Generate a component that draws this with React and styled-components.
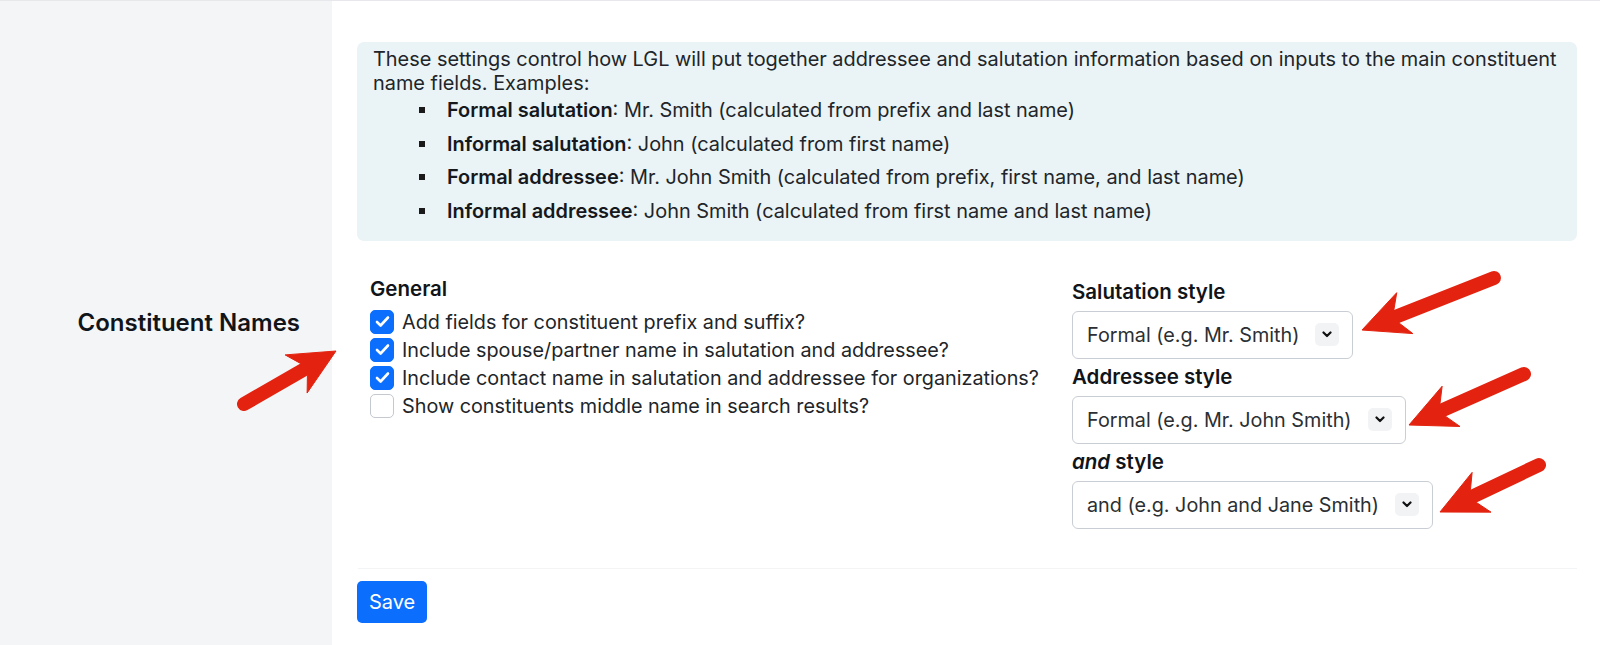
import React from "react";
import styled, { createGlobalStyle } from "styled-components";

const GlobalStyle = createGlobalStyle`
  html, body {
    margin: 0;
    padding: 0;
    background: #ffffff;
  }
  body {
    font-family: Inter, "Noto Sans", "Liberation Sans", sans-serif;
    color: #212529;
  }
`;

const examples = [
  ["Formal salutation", "Mr. Smith (calculated from prefix and last name)"],
  ["Informal salutation", "John (calculated from first name)"],
  ["Formal addressee", "Mr. John Smith (calculated from prefix, first name, and last name)"],
  ["Informal addressee", "John Smith (calculated from first name and last name)"],
];

const options = [
  { label: "Add fields for constituent prefix and suffix?", checked: true },
  { label: "Include spouse/partner name in salutation and addressee?", checked: true },
  { label: "Include contact name in salutation and addressee for organizations?", checked: true },
  { label: "Show constituents middle name in search results?", checked: false },
];

// annotation arrows: tail point and tip point
const arrows = [
  { tail: [244, 403], tip: [336, 350] },
  { tail: [1494, 277], tip: [1362, 329] },
  { tail: [1524, 373], tip: [1409, 424] },
  { tail: [1539, 464], tip: [1440, 511] },
];

function Arrow({ tail, tip }) {
  const headLen = 46;
  const headHalf = 22;
  const shaft = 14;
  const notch = 9;
  const dx = tip[0] - tail[0];
  const dy = tip[1] - tail[1];
  const len = Math.sqrt(dx * dx + dy * dy);
  const ux = dx / len;
  const uy = dy / len;
  const nx = -uy;
  const ny = ux;
  const bx = tip[0] - ux * headLen;
  const by = tip[1] - uy * headLen;
  const kx = tip[0] - ux * (headLen - notch);
  const ky = tip[1] - uy * (headLen - notch);
  const pts = [
    [tip[0], tip[1]],
    [bx + nx * headHalf, by + ny * headHalf],
    [kx + nx * shaft / 2, ky + ny * shaft / 2],
    [kx - nx * shaft / 2, ky - ny * shaft / 2],
    [bx - nx * headHalf, by - ny * headHalf],
  ];
  const ex = tip[0] - ux * (headLen - notch - 4);
  const ey = tip[1] - uy * (headLen - notch - 4);
  return (
    <g fill="#e3230f" stroke="#e3230f">
      <line x1={tail[0]} y1={tail[1]} x2={ex} y2={ey} strokeWidth={shaft} strokeLinecap="round" />
      <polygon points={pts.map((p) => p.join(",")).join(" ")} strokeWidth="1" strokeLinejoin="miter" />
    </g>
  );
}

function Chevron() {
  return (
    <svg width="10" height="7" viewBox="0 0 10 7">
      <path d="M1.5 1.5 L5 5 L8.5 1.5" fill="none" stroke="#111" strokeWidth="2.2" strokeLinecap="round" strokeLinejoin="round" />
    </svg>
  );
}

function Check() {
  return (
    <svg width="15" height="13" viewBox="0 0 15 13">
      <path d="M2 7 L5.6 10.5 L13 2.5" fill="none" stroke="#fff" strokeWidth="2.6" strokeLinecap="round" strokeLinejoin="round" />
    </svg>
  );
}

export default function App() {
  return (
    <Page>
      <GlobalStyle />
      <Sidebar>
        <SectionTitle>Constituent Names</SectionTitle>
      </Sidebar>
      <Main>
        <InfoBox>
          <Intro>
            These settings control how LGL will put together addressee and salutation information based on inputs to the main constituent name fields. Examples:
          </Intro>
          <ExampleList>
            {examples.map(([name, text]) => (
              <li key={name}>
                <b>{name}</b>: {text}
              </li>
            ))}
          </ExampleList>
        </InfoBox>

        <FormGrid>
          <LeftCol>
            <GroupTitle>General</GroupTitle>
            {options.map((o) => (
              <CheckRow key={o.label}>
                <Box $checked={o.checked}>{o.checked && <Check />}</Box>
                <span>{o.label}</span>
              </CheckRow>
            ))}
          </LeftCol>
          <RightCol>
            <FieldLabel>Salutation style</FieldLabel>
            <Select>
              <span>Formal (e.g. Mr. Smith)</span>
              <Caret><Chevron /></Caret>
            </Select>
            <FieldLabel>Addressee style</FieldLabel>
            <Select>
              <span>Formal (e.g. Mr. John Smith)</span>
              <Caret><Chevron /></Caret>
            </Select>
            <FieldLabel>
              <i>and</i> style
            </FieldLabel>
            <Select>
              <span>and (e.g. John and Jane Smith)</span>
              <Caret><Chevron /></Caret>
            </Select>
          </RightCol>
        </FormGrid>

        <Divider />
        <SaveButton>Save</SaveButton>
      </Main>

      <Annotations width="1600" height="645" viewBox="0 0 1600 645">
        {arrows.map((a, i) => (
          <Arrow key={i} tail={a.tail} tip={a.tip} />
        ))}
      </Annotations>
    </Page>
  );
}

const Page = styled.div`
  position: relative;
  display: flex;
  height: 645px;
  border-top: 1px solid #e7e8ec;
  box-sizing: border-box;
  overflow: hidden;
`;

const Sidebar = styled.div`
  width: 332px;
  flex-shrink: 0;
  background: #f4f5f7;
  display: flex;
  align-items: center;
  justify-content: flex-end;
  padding-right: 32px;
  box-sizing: border-box;
`;

const SectionTitle = styled.div`
  font-size: 24px;
  font-weight: 600;
  color: #111418;
  line-height: 28px;
`;

const Main = styled.div`
  flex: 1;
  padding: 41px 23px 0 25px;
`;

const InfoBox = styled.div`
  background: #eaf3f6;
  border-radius: 7px;
  padding: 5px 16px 0;
  font-size: 19.9px;
  line-height: 24px;
  color: #212529;
`;

const Intro = styled.p`
  margin: 0;
`;

const ExampleList = styled.ul`
  list-style: none;
  margin: 0;
  padding: 3px 0 18px 74px;

  li {
    position: relative;
  }
  li + li {
    margin-top: 9.5px;
  }
  li::before {
    content: "";
    position: absolute;
    left: -28px;
    top: 9px;
    width: 6px;
    height: 6px;
    background: #1a1a1a;
  }
  b {
    font-weight: 600;
    color: #15181c;
  }
`;

const FormGrid = styled.div`
  display: grid;
  grid-template-columns: 702px 1fr;
  padding-left: 13px;
  margin-top: 37px;
  font-size: 19.8px;
`;

const LeftCol = styled.div`
  display: flex;
  flex-direction: column;
`;

const GroupTitle = styled.div`
  font-size: 20.5px;
  font-weight: 600;
  color: #111418;
  line-height: 22px;
  margin-bottom: 8px;
`;

const CheckRow = styled.div`
  display: flex;
  align-items: center;
  gap: 8px;
  height: 28px;
  color: #212529;
`;

const Box = styled.span`
  width: 24px;
  height: 24px;
  flex-shrink: 0;
  box-sizing: border-box;
  border-radius: 5px;
  display: flex;
  align-items: center;
  justify-content: center;
  background: ${(p) => (p.$checked ? "#0b6efd" : "#ffffff")};
  border: 1px solid ${(p) => (p.$checked ? "#0b6efd" : "#c4c8cf")};
`;

const RightCol = styled.div`
  display: flex;
  flex-direction: column;
  align-items: flex-start;
  padding-top: 3px;
`;

const FieldLabel = styled.div`
  font-size: 20.5px;
  font-weight: 600;
  color: #111418;
  line-height: 22px;
  margin-bottom: 8px;

  i {
    font-style: italic;
  }
`;

const Select = styled.div`
  display: inline-flex;
  align-items: center;
  gap: 16px;
  height: 48px;
  box-sizing: border-box;
  padding: 0 13px 0 14px;
  border: 1px solid #c9ced4;
  border-radius: 6px;
  color: #2b2f33;
  margin-bottom: 7px;

  &:last-child {
    margin-bottom: 0;
  }
`;

const Caret = styled.span`
  width: 24px;
  height: 23px;
  border-radius: 5px;
  background: #f1f3f5;
  display: flex;
  align-items: center;
  justify-content: center;
`;

const Divider = styled.div`
  height: 1px;
  background: #f3f4f6;
  margin: 39px 0 0 1px;
`;

const SaveButton = styled.button`
  margin-top: 12px;
  height: 42px;
  padding: 0 12px;
  border: none;
  border-radius: 5px;
  background: #0b6efd;
  color: #ffffff;
  font-family: Inter, "Noto Sans", sans-serif;
  font-size: 20px;
  cursor: pointer;
`;

const Annotations = styled.svg`
  position: absolute;
  left: 0;
  top: 0;
  pointer-events: none;
`;
